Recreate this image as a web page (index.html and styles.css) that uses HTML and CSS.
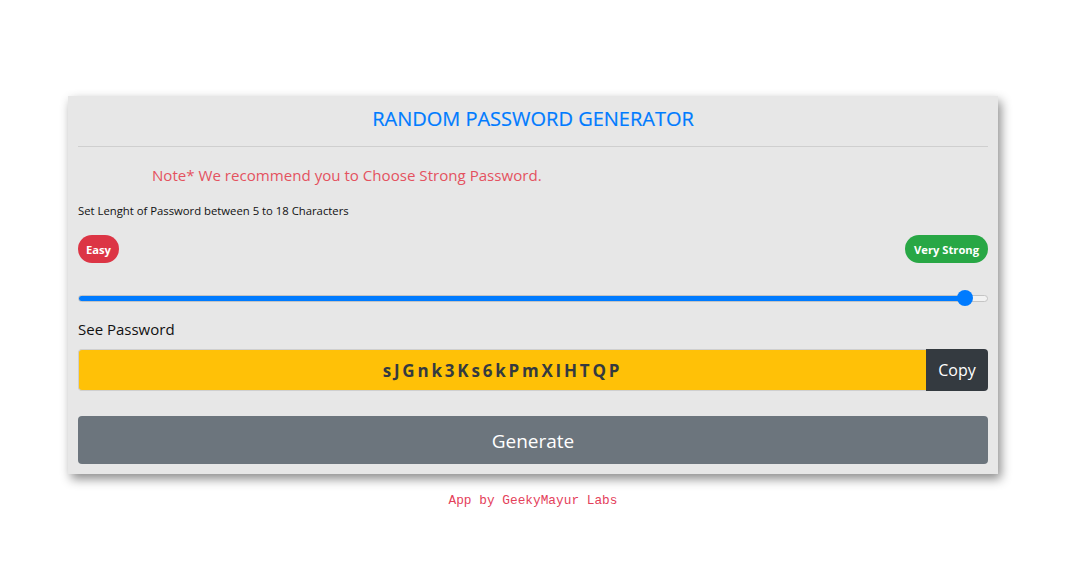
FILE: index.html
```html
<!DOCTYPE html>
<html lang="en">
<head>
<meta charset="utf-8">
<title>Random Password Generator</title>
<link rel="stylesheet" href="styles.css">
</head>
<body>
<main class="card">
  <h1 class="title">RANDOM PASSWORD GENERATOR</h1>
  <hr class="divider">
  <p class="note">Note* We recommend you to Choose Strong Password.</p>
  <p class="hint">Set Lenght of Password between 5 to 18 Characters</p>
  <div class="badges">
    <span class="badge badge-easy">Easy</span>
    <span class="badge badge-strong">Very Strong</span>
  </div>
  <input class="slider" type="range" min="5" max="18" step="any" value="17.8">
  <label class="label">See Password</label>
  <div class="pw-row">
    <div class="pw-field">sJGnk3Ks6kPmXIHTQP</div>
    <button class="copy-btn">Copy</button>
  </div>
  <button class="generate-btn">Generate</button>
</main>
<footer class="footer"><code class="credit">App by GeekyMayur Labs</code></footer>
</body>
</html>
```
FILE: styles.css
```css
* { box-sizing: border-box; }
html, body { margin: 0; padding: 0; background: #fff; }
body {
  font-family: "Open Sans", "Noto Sans", "Liberation Sans", sans-serif;
  color: #212529;
  padding-top: 96px;
}
.card {
  width: 930px;
  margin-left: 68px;
  background: #e7e7e7;
  padding: 10px;
  box-shadow: 3px 5px 10px rgba(0,0,0,0.45);
  display: flex;
  flex-direction: column;
}
.title {
  margin: 0;
  font-size: 20px;
  font-weight: 400;
  line-height: 26px;
  text-align: center;
  color: #007bff;
  -webkit-text-stroke: 0.2px #007bff;
}
.divider {
  margin: 14px 0 0 0;
  border: 0;
  border-top: 1px solid #cfcfcf;
  height: 0;
}
.note {
  margin: 16px 0 0 74px;
  font-size: 15.1px;
  line-height: 24px;
  color: #e4525f;
}
.hint {
  margin: 15px 0 0 0;
  font-size: 11.3px;
  line-height: 18px;
  color: #111;
}
.badges {
  margin-top: 15px;
  display: flex;
  justify-content: space-between;
}
.badge {
  display: inline-flex;
  align-items: center;
  height: 28px;
  padding: 0 8px;
  border-radius: 14px;
  color: #fff;
  font-size: 11.2px;
  font-weight: 700;
}
.badge-easy { background: #dc3545; }
.badge-strong { background: #28a745; padding: 0 9px; }
.slider {
  -webkit-appearance: none;
  appearance: none;
  margin: 27px 0 0 0;
  width: 100%;
  height: 16px;
  background: transparent;
}
.slider::-webkit-slider-runnable-track {
  height: 7px;
  border-radius: 4px;
  background: linear-gradient(to right, #007bff 0, #007bff 97.6%, #f2f2f2 97.6%);
  border: 1px solid #c4c4c4;
}
.slider::-webkit-slider-thumb {
  -webkit-appearance: none;
  width: 16px;
  height: 16px;
  border-radius: 50%;
  background: #007bff;
  margin-top: -5.5px;
  border: 0;
}
.label {
  margin-top: 11px;
  font-size: 15px;
  line-height: 24px;
  color: #111;
}
.pw-row {
  margin-top: 8px;
  display: flex;
  height: 42px;
}
.pw-field {
  flex: 1;
  display: flex;
  align-items: center;
  justify-content: center;
  background: #ffc107;
  border: 1px solid #cfcfcf;
  border-right: 0;
  border-radius: 4px 0 0 4px;
  font-size: 17px;
  font-weight: 700;
  letter-spacing: 2.8px;
  color: #343a40;
}
.copy-btn {
  width: 62px;
  border: 0;
  border-radius: 0 4px 4px 0;
  background: #343a40;
  color: #fff;
  font-family: inherit;
  font-size: 16px;
  padding: 0;
}
.generate-btn {
  margin-top: 25px;
  height: 48px;
  border: 0;
  border-radius: 4px;
  background: #6c757d;
  color: #fff;
  font-family: inherit;
  font-size: 19px;
  padding-top: 2px;
}
.footer {
  width: 930px;
  margin-left: 68px;
  margin-top: 14px;
  text-align: center;
  line-height: 20px;
}
.credit {
  font-family: "Liberation Mono", "DejaVu Sans Mono", monospace;
  font-size: 12.8px;
  color: #e4405a;
}
```
